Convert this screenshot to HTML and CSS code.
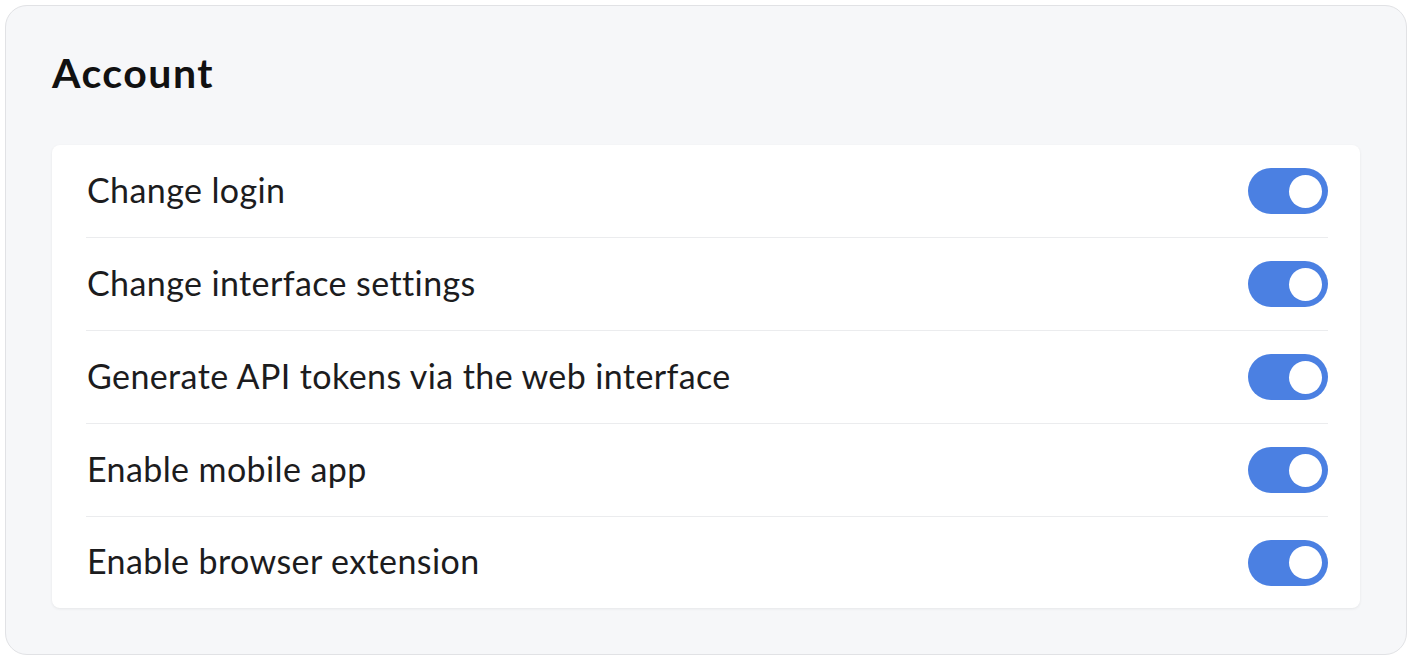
FILE: index.html
```html
<!DOCTYPE html>
<html lang="en">
<head>
<meta charset="utf-8">
<title>Account</title>
<link rel="stylesheet" href="styles.css">
</head>
<body>
<section class="panel">
  <h2 class="panel-title">Account</h2>
  <div class="card">
    <div class="row"><span class="label">Change login</span><span class="toggle on"><span class="knob"></span></span></div>
    <div class="row"><span class="label">Change interface settings</span><span class="toggle on"><span class="knob"></span></span></div>
    <div class="row"><span class="label">Generate API tokens via the web interface</span><span class="toggle on"><span class="knob"></span></span></div>
    <div class="row"><span class="label">Enable mobile app</span><span class="toggle on"><span class="knob"></span></span></div>
    <div class="row"><span class="label">Enable browser extension</span><span class="toggle on"><span class="knob"></span></span></div>
  </div>
</section>
</body>
</html>
```

FILE: styles.css
```css
* { box-sizing: border-box; }
html, body { margin: 0; background: #ffffff; }
body {
  padding: 5px;
  font-family: Lato, "Noto Sans", sans-serif;
  color: #1c1c1e;
}
.panel {
  width: 1402px;
  height: 650px;
  background: #f6f7f9;
  border: 1px solid #e1e2e5;
  border-radius: 22px;
  padding: 46px;
}
.panel-title {
  margin: 0 0 53px 0;
  padding-top: 2px;
  font-size: 41px;
  line-height: 38px;
  font-weight: 700;
  letter-spacing: 1.5px;
  color: #111;
}
.card {
  background: #ffffff;
  border-radius: 8px;
  box-shadow: 0 1px 3px rgba(0, 0, 0, 0.07);
  padding: 0 32px 0 34px;
}
.row {
  height: 93px;
  display: flex;
  align-items: center;
  justify-content: space-between;
  border-bottom: 1px solid #ebecee;
}
.row:last-child { border-bottom: none; height: 91px; }
.label {
  font-size: 34px;
  letter-spacing: 0.4px;
  color: #1c1c1e;
  padding-left: 1px;
  margin-bottom: 4px;
}
.toggle {
  width: 80px;
  height: 46px;
  border-radius: 23px;
  background: #4b80e2;
  display: flex;
  align-items: center;
  justify-content: flex-end;
  padding: 0 6px;
  flex: none;
}
.knob {
  width: 33px;
  height: 33px;
  border-radius: 50%;
  background: #ffffff;
}
```
